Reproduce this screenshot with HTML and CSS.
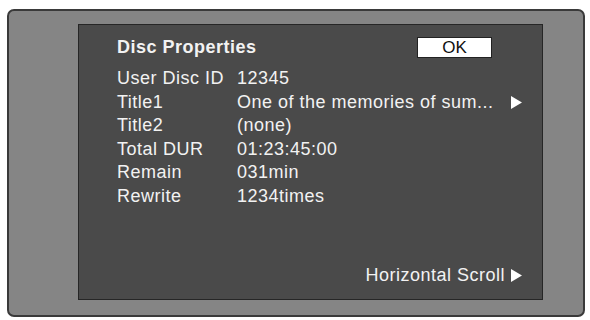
FILE: index.html
```html
<!DOCTYPE html>
<html lang="en">
<head>
    <meta charset="UTF-8">
    <meta name="viewport" content="width=device-width, initial-scale=1.0">
    <title>Disc Properties</title>
    <link rel="stylesheet" href="styles.css">
</head>
<body>

<div class="screen">
    <section class="panel">
        <header class="panel-head">
            <h1>Disc Properties</h1>
            <button class="ok-btn">OK</button>
        </header>

        <dl class="props">
            <div class="row"><dt>User Disc ID</dt><dd>12345</dd></div>
            <div class="row">
                <dt>Title1</dt>
                <dd class="more">One of the memories of sum...
                    <svg class="arrow" viewBox="0 0 11 13"><path d="M0 0 L11 6.5 L0 13 Z"/></svg>
                </dd>
            </div>
            <div class="row"><dt>Title2</dt><dd>(none)</dd></div>
            <div class="row"><dt>Total DUR</dt><dd>01:23:45:00</dd></div>
            <div class="row"><dt>Remain</dt><dd>031min</dd></div>
            <div class="row"><dt>Rewrite</dt><dd>1234times</dd></div>
        </dl>

        <footer class="panel-foot">
            Horizontal Scroll
            <svg class="arrow" viewBox="0 0 11 13"><path d="M0 0 L11 6.5 L0 13 Z"/></svg>
        </footer>
    </section>
</div>

</body>
</html>
```

FILE: styles.css
```css
* {
    box-sizing: border-box;
}
body {
    margin: 0;
    padding: 0;
    background: #fff;
    font-family: "Liberation Sans", Arial, sans-serif;
}
.screen {
    margin: 9px 0 0 7px;
    width: 578px;
    height: 308px;
    border: 2px solid #3a3a3a;
    border-radius: 7px;
    background: #858585;
    padding: 13px 0 0 69px;
}
.panel {
    width: 465px;
    height: 276px;
    background: #4a4a4a;
    border: 1px solid #262626;
    color: #f2f2f2;
    padding: 12px 20px 12px 38px;
    display: flex;
    flex-direction: column;
}
.panel-head {
    display: flex;
    align-items: center;
    justify-content: space-between;
    padding-right: 30px;
}
.panel-head h1 {
    margin: 0;
    font-size: 18px;
    line-height: 21px;
    font-weight: bold;
    letter-spacing: 0.5px;
}
.ok-btn {
    width: 75px;
    height: 21px;
    background: #fff;
    border: 1px solid #222;
    color: #111;
    font-family: inherit;
    font-size: 17px;
    line-height: 19px;
    padding: 0;
}
.props {
    margin: 9px 0 0 0;
}
.row {
    display: flex;
    font-size: 18px;
    line-height: 23.6px;
    letter-spacing: 0.5px;
}
.row dt {
    width: 120px;
}
.row dd {
    margin: 0;
    flex: 1;
}
.more {
    display: flex;
    align-items: center;
    justify-content: space-between;
}
.arrow {
    width: 11px;
    height: 13px;
    fill: #fff;
    flex: none;
}
.panel-foot {
    margin-top: auto;
    display: flex;
    align-items: center;
    justify-content: flex-end;
    gap: 6px;
    font-size: 18px;
    line-height: 23px;
    letter-spacing: 0.5px;
}
```
